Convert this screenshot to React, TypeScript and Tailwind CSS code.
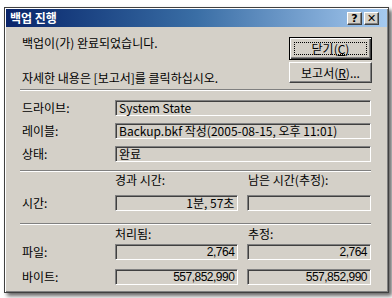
import React from 'react';

const font = '[font-family:"Noto_Sans_CJK_KR","Liberation_Sans",sans-serif]';
const numFont = '[font-family:"Liberation_Sans","Noto_Sans_CJK_KR",sans-serif]';

// sunken read-only field
const Field: React.FC<{ text?: string; right?: boolean; className?: string }> = ({ text, right, className = '' }) => (
  <div
    className={`h-[16px] flex items-center px-[3px] border border-t-[#808080] border-l-[#808080] border-b-white border-r-white shadow-[inset_1px_1px_0_#404040] leading-[14px] text-black ${right ? 'justify-end' : ''} ${className}`}
  >
    {text}
  </div>
);

const Button: React.FC<{ children: React.ReactNode; primary?: boolean; className?: string }> = ({ children, primary, className = '' }) => (
  <div
    className={`relative w-[83px] flex items-center justify-center text-[12px] text-black ${font} ${
      primary
        ? 'border border-black shadow-[inset_1px_1px_0_#fff,inset_-1px_-1px_0_#404040,inset_-2px_-2px_0_#808080]'
        : 'border border-t-white border-l-white border-b-[#404040] border-r-[#404040] shadow-[inset_-1px_-1px_0_#808080]'
    } ${className}`}
  >
    {primary && <div className="absolute inset-[4px] border border-dotted border-black" />}
    <span className="relative">{children}</span>
  </div>
);

const TitleBtn: React.FC<{ children: React.ReactNode }> = ({ children }) => (
  <div className="w-[15px] h-[13px] bg-[#d4d0c8] flex items-center justify-center border border-t-white border-l-white border-b-[#404040] border-r-[#404040] shadow-[inset_-1px_-1px_0_#808080] text-[11px] font-bold leading-none text-black [font-family:'DejaVu_Sans',sans-serif]">
    {children}
  </div>
);

const Separator: React.FC<{ className?: string }> = ({ className = '' }) => (
  <div className={`ml-[14px] mr-[16px] h-[2px] border-t border-t-[#808080] border-b border-b-white ${className}`} />
);

export default function App() {
  return (
    <div className="w-[392px] h-[298px] bg-white pt-[7px] pl-[4px] overflow-hidden">
      <div className="w-[385px] h-[286px] bg-[#d4d0c8] border border-[#404040] p-[1px] shadow-[inset_1px_1px_0_#fff,inset_-1px_-1px_0_#808080,3px_3px_4px_rgba(0,0,0,0.6)]">
        {/* title bar */}
        <div className="h-[18px] flex items-center justify-between pl-[4px] pr-[8px] bg-gradient-to-r from-[#0a246a] via-[#3a6ea5] to-[#a6caf0]">
          <span className={`text-[12px] font-bold text-white leading-none ${font}`}>백업 진행</span>
          <div className="flex gap-[2px]">
            <TitleBtn>?</TitleBtn>
            <TitleBtn>✕</TitleBtn>
          </div>
        </div>

        {/* top section */}
        <div className="h-[62px] flex justify-between">
          <div className={`pl-[16px] pt-[8px] text-[12px] text-black ${font}`}>
            <div className="h-[16px] leading-[16px]">백업이(가) 완료되었습니다.</div>
            <div className="h-[16px] leading-[16px] mt-[19px]">자세한 내용은 [보고서]를 클릭하십시오.</div>
          </div>
          <div className="pt-[10px] pr-[15px] flex flex-col gap-[2px]">
            <Button primary className="h-[23px]">
              닫기(<span className="underline">C</span>)
            </Button>
            <Button className="h-[21px]">
              보고서(<span className="underline">R</span>)...
            </Button>
          </div>
        </div>

        <Separator />

        {/* drive / label / status */}
        <div className={`mt-[9px] pl-[16px] pr-[16px] flex flex-col gap-[7px] text-[12px] text-black ${font}`}>
          {[
            ['드라이브:', 'System State'],
            ['레이블:', 'Backup.bkf 작성(2005-08-15, 오후 11:01)'],
            ['상태:', '완료'],
          ].map(([label, value]) => (
            <div key={label} className="flex items-center h-[16px]">
              <div className="w-[93px]">{label}</div>
              <Field text={value} className={`flex-1 text-[12px] ${font}`} />
            </div>
          ))}
        </div>

        <Separator className="mt-[8px]" />

        {/* time */}
        <div className={`pl-[16px] pr-[16px] text-[12px] text-black ${font}`}>
          <div className="flex h-[16px] leading-[16px]">
            <div className="w-[93px]" />
            <div className="w-[124px]">경과 시간:</div>
            <div className="ml-[9px]">남은 시간(추정):</div>
          </div>
          <div className="flex items-center mt-[6px]">
            <div className="w-[93px]">시간:</div>
            <Field text="1분, 57초" right className={`w-[124px] text-[12px] ${font}`} />
            <Field className="w-[124px] ml-[9px]" />
          </div>
        </div>

        <Separator className="mt-[11px]" />

        {/* files / bytes */}
        <div className={`pl-[16px] pr-[16px] text-[12px] text-black ${font}`}>
          <div className="flex h-[16px] leading-[16px] mt-[1px]">
            <div className="w-[93px]" />
            <div className="w-[124px]">처리됨:</div>
            <div className="ml-[9px]">추정:</div>
          </div>
          <div className="flex items-center mt-[1px]">
            <div className="w-[93px]">파일:</div>
            <Field text="2,764" right className={`w-[124px] text-[12px] tracking-[-0.5px] ${numFont}`} />
            <Field text="2,764" right className={`w-[124px] ml-[9px] text-[12px] tracking-[-0.5px] ${numFont}`} />
          </div>
          <div className="flex items-center mt-[7px]">
            <div className="w-[93px]">바이트:</div>
            <Field text="557,852,990" right className={`w-[124px] text-[12px] tracking-[-0.5px] ${numFont}`} />
            <Field text="557,852,990" right className={`w-[124px] ml-[9px] text-[12px] tracking-[-0.5px] ${numFont}`} />
          </div>
        </div>
      </div>
    </div>
  );
}
